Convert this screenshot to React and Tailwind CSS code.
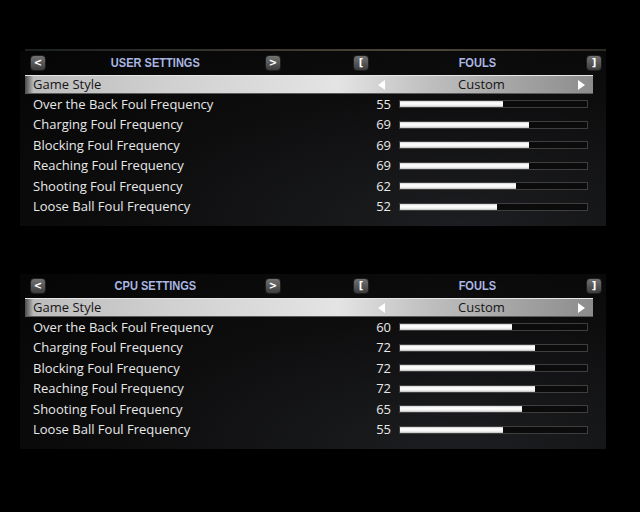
import React from "react";

const userRows = [
  ["Over the Back Foul Frequency", 55],
  ["Charging Foul Frequency", 69],
  ["Blocking Foul Frequency", 69],
  ["Reaching Foul Frequency", 69],
  ["Shooting Foul Frequency", 62],
  ["Loose Ball Foul Frequency", 52],
];

const cpuRows = [
  ["Over the Back Foul Frequency", 60],
  ["Charging Foul Frequency", 72],
  ["Blocking Foul Frequency", 72],
  ["Reaching Foul Frequency", 72],
  ["Shooting Foul Frequency", 65],
  ["Loose Ball Foul Frequency", 55],
];

function PadButton({ children }) {
  return (
    <div className="flex h-[16px] w-[16px] items-center justify-center rounded-[4px] border border-[#1e1e1e] bg-[linear-gradient(to_bottom,#727272,#3c3c3c)] font-['DejaVu_Sans',sans-serif] text-[10px] font-bold leading-none text-white">
      {children}
    </div>
  );
}

function Slider({ value }) {
  return (
    <div className="h-[8px] w-[189px] border border-[#3e3e3e] bg-[#0b0b0b]">
      <div
        className="h-full bg-[linear-gradient(to_bottom,#cfcfcf,#ffffff_30%,#f4f4f4_70%,#bdbdbd)]"
        style={{ width: `${value}%` }}
      />
    </div>
  );
}

function HeaderTitle({ width, children }) {
  return (
    <div className={`${width} flex justify-center`}>
      <span className="inline-block scale-x-[0.92] font-['Liberation_Sans',sans-serif] text-[12px] font-bold leading-none text-[#a9b7e2]">
        {children}
      </span>
    </div>
  );
}

function Panel({ title, rows, withLine }) {
  return (
    <div className="relative ml-[20px] w-[586px] bg-[radial-gradient(ellipse_at_75%_100%,#1d1e21_0%,#0d0d0e_55%,#050505_100%)] pb-[9px]">
      {withLine && (
        <div className="absolute -top-[2px] left-[5px] h-[2px] w-[581px] bg-[linear-gradient(to_right,#1c2022,#3a372e_40%,#4a463a_70%,#2c2a24)]" />
      )}
      {/* header */}
      <div className="flex h-[23px] items-center pl-[10px] pt-[1px]">
        <PadButton>&lt;</PadButton>
        <HeaderTitle width="w-[219px]">{title}</HeaderTitle>
        <PadButton>&gt;</PadButton>
        <div className="w-[72px]" />
        <PadButton>[</PadButton>
        <HeaderTitle width="w-[217px]">FOULS</HeaderTitle>
        <PadButton>]</PadButton>
      </div>

      {/* game style selector */}
      <div className="ml-[5px] mt-[1px] flex h-[19px] w-[568px] items-center border-t border-t-[#e6e6e6] border-b border-b-[#5a5a5a] bg-[linear-gradient(to_right,#4a4a4a_0%,#bcbcbc_1.5%,#d0d0d0_25%,#e4e4e4_55%,#bdbdbd_72%,#8c8c8c_100%)] font-['Open_Sans',sans-serif] text-[13px] text-[#161616]">
        <div className="flex-1 pl-[8px]">Game Style</div>
        <div className="flex w-[218px] items-center justify-between px-[3px]">
          <div className="h-0 w-0 border-y-[5px] border-r-[7px] border-y-transparent border-r-white" />
          <div className="text-center">Custom</div>
          <div className="mr-[5px] h-0 w-0 border-y-[5px] border-l-[7px] border-y-transparent border-l-white" />
        </div>
      </div>

      {/* rows */}
      <div className="ml-[5px] flex w-[568px] flex-col">
        {rows.map(([label, value]) => (
          <div
            key={label}
            className="flex h-[20.5px] items-center font-['Open_Sans',sans-serif] text-[13px] text-[#e8e8e8]"
          >
            <div className="flex-1 pl-[8px]">{label}</div>
            <div className="w-[30px] text-right">{value}</div>
            <div className="ml-[8px] mr-[5px]">
              <Slider value={value} />
            </div>
          </div>
        ))}
      </div>
    </div>
  );
}

export default function App() {
  return (
    <div className="h-[512px] w-[640px] overflow-hidden bg-black pt-[51px]">
      <Panel title="USER SETTINGS" rows={userRows} withLine />
      <div className="h-[48px]" />
      <Panel title="CPU SETTINGS" rows={cpuRows} />
    </div>
  );
}
